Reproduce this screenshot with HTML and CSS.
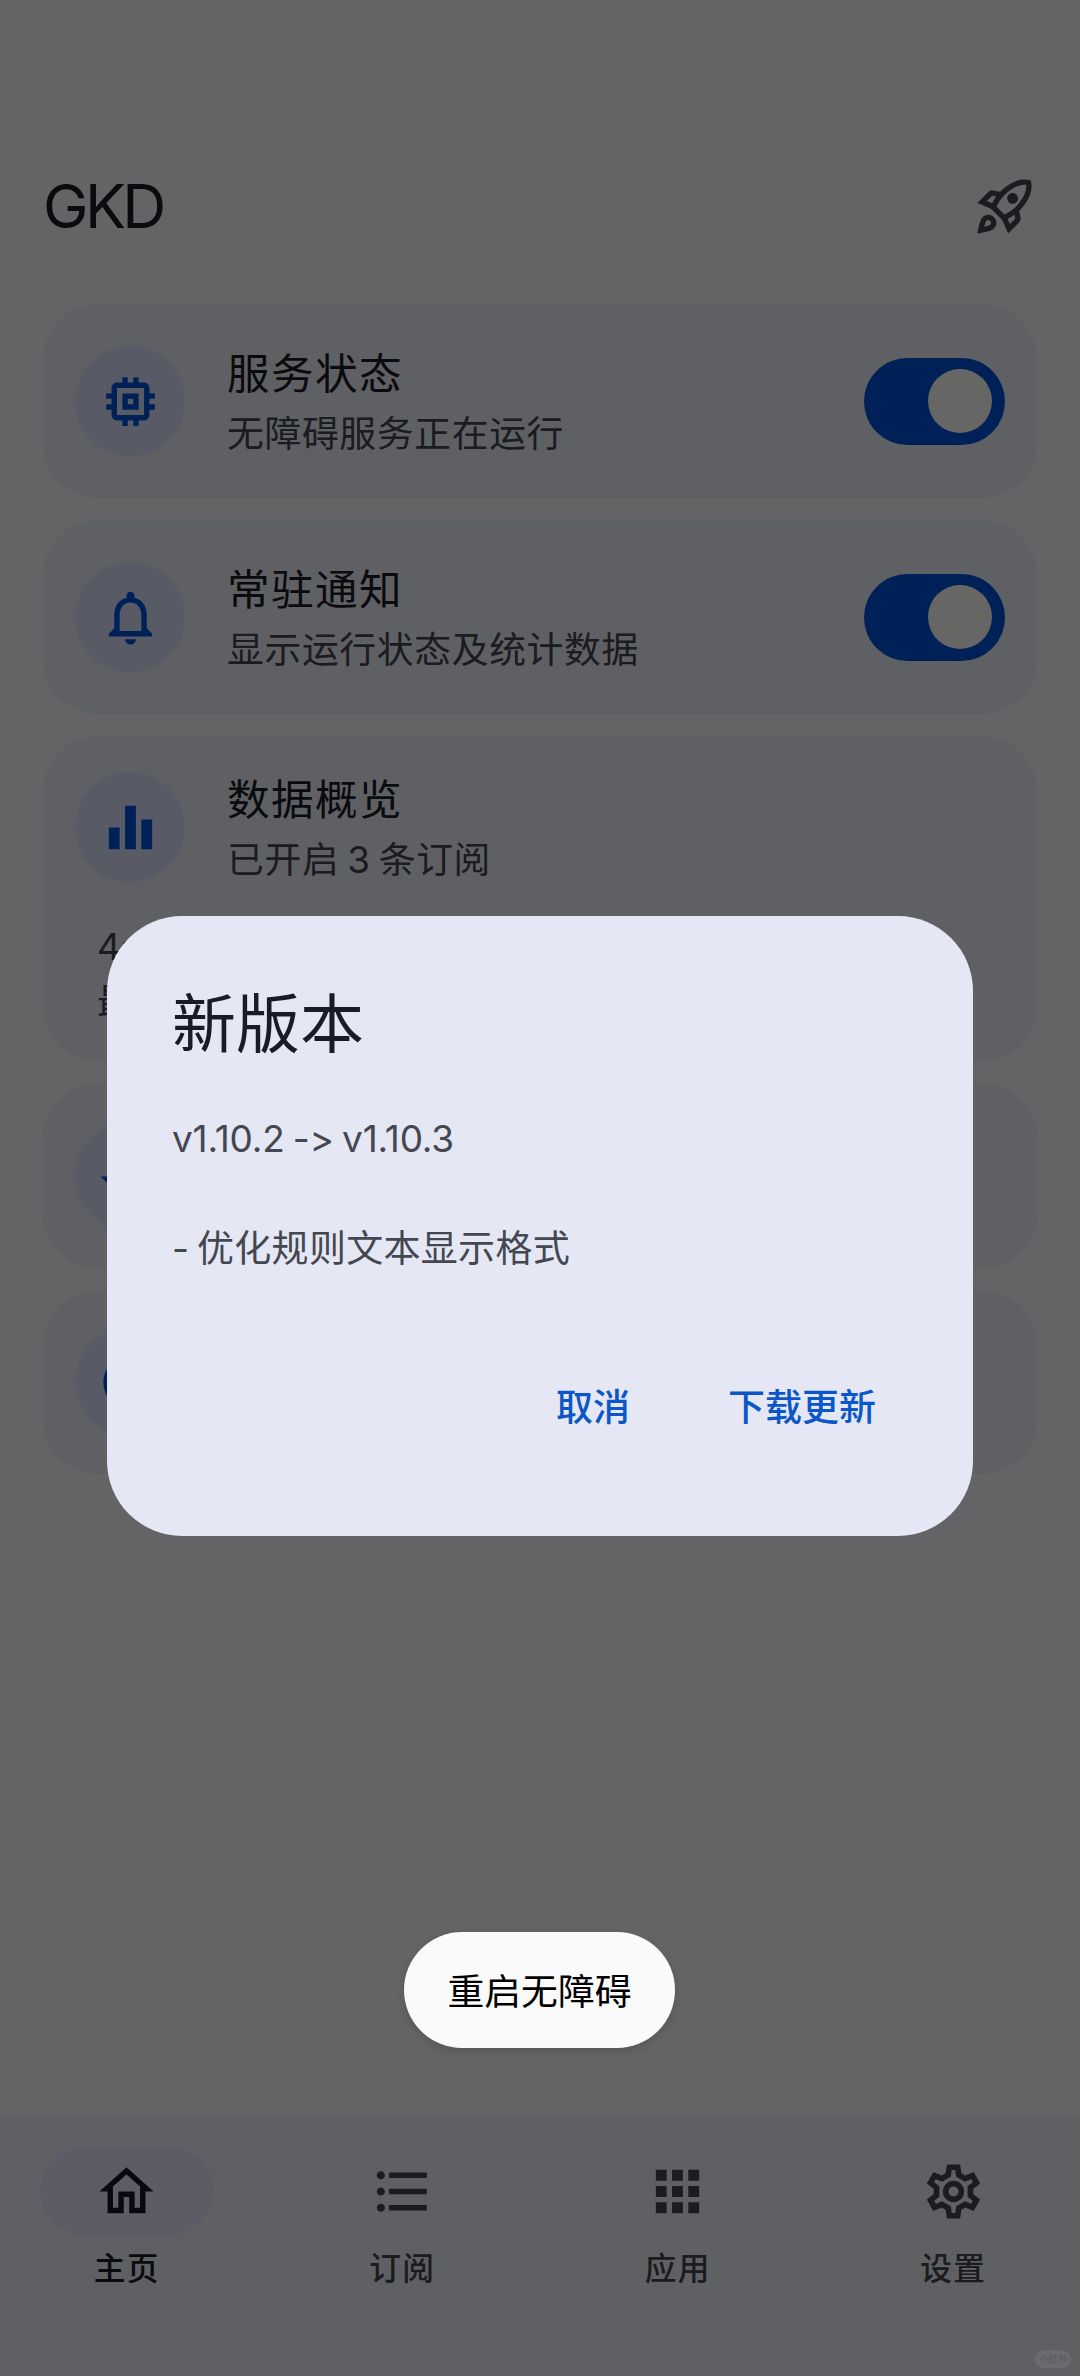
FILE: index.html
```html
<!DOCTYPE html>
<html lang="zh-CN">
<head>
<meta charset="utf-8">
<title>GKD</title>
<link rel="stylesheet" href="styles.css">
</head>
<body>
<div class="screen">
  <div class="app">
    <header class="topbar">
      <h1 class="brand">GKD</h1>
      <svg class="icon" viewBox="0 0 24 24"><path d="M6 15c-.83 0-1.58.34-2.12.88C2.7 17.06 2 22 2 22s4.94-.7 6.12-1.88C8.66 19.58 9 18.83 9 18c0-1.66-1.34-3-3-3zm.71 3.71c-.28.28-2.17.76-2.17.76s.47-1.88.76-2.17c.17-.19.42-.3.7-.3.55 0 1 .45 1 1 0 .28-.11.53-.29.71zM17.42 13.65c6.36-6.36 4.24-11.31 4.24-11.31s-4.95-2.12-11.31 4.24l-2.49-.5c-.65-.13-1.33.08-1.81.55L2 10.69l5 2.14L11.17 17l2.14 5 4.05-4.05c.47-.47.68-1.15.55-1.81l-.49-2.49zM7.41 10.83L5.5 10.01l1.97-1.97 1.44.29c-.57.83-1.08 1.7-1.5 2.5zM13.99 18.5l-.82-1.91c.8-.42 1.67-.93 2.49-1.5l.29 1.44-1.96 1.97zM16 12.24c-1.32 1.32-3.38 2.4-4.04 2.73l-2.93-2.93c.32-.65 1.4-2.71 2.73-4.04 4.68-4.68 8.23-3.99 8.23-3.99s.69 3.55-3.99 8.23zM15 11c1.1 0 2-.9 2-2s-.9-2-2-2-2 .9-2 2 .9 2 2 2z"/></svg>
    </header>

    <main class="cards">
      <section class="card card-switch">
        <span class="badge"><svg class="icon" viewBox="0 0 24 24"><path d="M15 9H9v6h6V9zm-2 4h-2v-2h2v2zm8-2V9h-2V7c0-1.1-.9-2-2-2h-2V3h-2v2h-2V3H9v2H7c-1.1 0-2 .9-2 2v2H3v2h2v2H3v2h2v2c0 1.1.9 2 2 2h2v2h2v-2h2v2h2v-2h2c1.1 0 2-.9 2-2v-2h2v-2h-2v-2h2zm-4 6H7V7h10v10z"/></svg></span>
        <div class="label"><h2>服务状态</h2><p>无障碍服务正在运行</p></div>
        <span class="switch"><span class="thumb"></span></span>
      </section>
      <section class="card card-switch">
        <span class="badge"><svg class="icon" viewBox="0 0 24 24"><path d="M12 22c1.1 0 2-.9 2-2h-4c0 1.1.9 2 2 2zm6-6v-5c0-3.07-1.63-5.64-4.5-6.32V4c0-.83-.67-1.5-1.5-1.5s-1.5.67-1.5 1.5v.68C7.64 5.36 6 7.92 6 11v5l-2 2v1h16v-1l-2-2zm-2 1H8v-6c0-2.48 1.51-4.5 4-4.5s4 2.02 4 4.5v6z"/></svg></span>
        <div class="label"><h2>常驻通知</h2><p>显示运行状态及统计数据</p></div>
        <span class="switch"><span class="thumb"></span></span>
      </section>
      <section class="card card-stats">
        <div class="row">
          <span class="badge"><svg class="icon" viewBox="0 0 24 24"><path d="M10 20h4V4h-4v16zm-6 0h4v-8H4v8zM16 9v11h4V9h-4z"/></svg></span>
          <div class="label"><h2>数据概览</h2><p>已开启 3 条订阅</p></div>
        </div>
        <p class="stats">4全<br>最</p>
      </section>
      <section class="card card-link">
        <span class="badge"><svg class="icon" viewBox="0 0 24 24"><path d="M13 3a9 9 0 0 0-9 9H1l3.89 3.89.07.14L9 12H6c0-3.87 3.13-7 7-7s7 3.13 7 7-3.13 7-7 7c-1.93 0-3.68-.79-4.94-2.06l-1.42 1.42A8.954 8.954 0 0 0 13 21a9 9 0 0 0 0-18zm-1 5v5l4.28 2.54.72-1.21-3.5-2.08V8H12z"/></svg></span>
      </section>
      <section class="card card-link">
        <span class="badge"><svg class="icon" viewBox="0 0 24 24"><path d="M11 18h2v-2h-2v2zm1-16C6.48 2 2 6.48 2 12s4.48 10 10 10 10-4.48 10-10S17.52 2 12 2zm0 18c-4.41 0-8-3.59-8-8s3.59-8 8-8 8 3.59 8 8-3.59 8-8 8zm0-14c-2.21 0-4 1.79-4 4h2c0-1.1.9-2 2-2s2 .9 2 2c0 2-3 1.75-3 5h2c0-2.25 3-2.5 3-5 0-2.21-1.79-4-4-4z"/></svg></span>
      </section>
    </main>

    <nav class="nav">
      <a class="tab active"><span class="pill"><svg class="icon" viewBox="0 0 24 24"><path d="M12 5.69l5 4.5V18h-2v-6H9v6H7v-7.81l5-4.5M12 3L2 12h3v8h6v-6h2v6h6v-8h3L12 3z"/></svg></span><span>主页</span></a>
      <a class="tab"><span class="pill"><svg class="icon" viewBox="0 0 24 24"><path d="M4 10.5c-.83 0-1.5.67-1.5 1.5s.67 1.5 1.5 1.5 1.5-.67 1.5-1.5-.67-1.5-1.5-1.5zm0-6c-.83 0-1.5.67-1.5 1.5S3.17 7.5 4 7.5 5.5 6.83 5.5 6 4.83 4.5 4 4.5zm0 12c-.83 0-1.5.68-1.5 1.5s.68 1.5 1.5 1.5 1.5-.68 1.5-1.5-.67-1.5-1.5-1.5zM7 19h14v-2H7v2zm0-6h14v-2H7v2zm0-8v2h14V5H7z"/></svg></span><span>订阅</span></a>
      <a class="tab"><span class="pill"><svg class="icon" viewBox="0 0 24 24"><path d="M4 8h4V4H4v4zm6 12h4v-4h-4v4zm-6 0h4v-4H4v4zm0-6h4v-4H4v4zm6 0h4v-4h-4v4zm6-10v4h4V4h-4zm-6 4h4V4h-4v4zm6 6h4v-4h-4v4zm0 6h4v-4h-4v4z"/></svg></span><span>应用</span></a>
      <a class="tab"><span class="pill"><svg class="icon" viewBox="0 0 24 24"><g fill="none" stroke="currentColor" stroke-width="2.1"><path d="M10.45 3.05h3.1l.4 2.85 2.35 1.35 2.7-1.1 1.5 2.65-2.25 1.75v2.9l2.25 1.75-1.5 2.65-2.7-1.1-2.35 1.35-.4 2.85h-3.1l-.4-2.85-2.35-1.35-2.7 1.1-1.5-2.65 2.25-1.75v-2.9L3.5 8.8 5 6.15l2.7 1.1 2.35-1.35z"/><circle cx="12" cy="12" r="2.9"/></g></svg></span><span>设置</span></a>
    </nav>
  </div>

  <div class="scrim"></div>
  <div class="dialog">
    <h2 class="dialog-title">新版本</h2>
    <div class="dialog-body"><p class="version">v1.10.2 -&gt; v1.10.3</p><p>- 优化规则文本显示格式</p></div>
    <div class="actions"><span>取消</span><span>下载更新</span></div>
  </div>
  <div class="toast">重启无障碍</div>
  <div class="watermark">小红书</div>
</div>
</body>
</html>
```
FILE: styles.css
```css
* { box-sizing: border-box; margin: 0; padding: 0; }

body {
  width: 1080px;
  height: 2376px;
  overflow: hidden;
  font-family: Inter, "Noto Sans CJK SC", sans-serif;
  font-weight: 400;
}

.screen { position: relative; width: 1080px; height: 2376px; }

.app {
  display: flex;
  flex-direction: column;
  height: 100%;
  background: #fafafe;
  color: #191c24;
}

.icon { display: block; width: 65px; height: 65px; fill: currentColor; }

.topbar {
  display: flex;
  align-items: center;
  justify-content: space-between;
  height: 304px;
  padding: 108px 43px 0;
  color: #44474f;
}
.brand {
  color: #191c24;
  font-size: 61px;
  font-weight: 400;
  line-height: 76px;
  letter-spacing: -3.6px;
}

.cards { flex: 1; display: flex; flex-direction: column; gap: 22px; padding: 0 43px; }
.card { border-radius: 55px; background: #eef0f8; padding: 0 32px; }
.card-switch { display: flex; align-items: center; height: 194px; }
.card-stats { height: 326px; padding-top: 31px; }
.card-link { display: flex; align-items: center; height: 184px; }
.row { display: flex; align-items: center; }

.badge {
  display: grid;
  place-items: center;
  flex: none;
  width: 110px;
  height: 110px;
  border-radius: 50%;
  background: #dce4ff;
  color: #0052dc;
}

.label { flex: 1; padding-left: 42px; }
.label h2 { font-size: 42.6px; font-weight: 400; line-height: 66px; letter-spacing: 1.4px; }
.label p { color: #44474f; font-size: 36.8px; line-height: 54px; letter-spacing: .65px; word-spacing: -3px; }
.stats { padding: 32px 0 0 22px; color: #44474f; font-size: 36.8px; line-height: 55px; letter-spacing: 1px; }

.switch {
  display: flex;
  align-items: center;
  justify-content: flex-end;
  width: 141px;
  height: 87px;
  padding-right: 13px;
  border-radius: 44px;
  background: #0052dc;
}
.thumb { width: 64px; height: 64px; border-radius: 50%; background: #fffffc; }

.nav { display: flex; gap: 22px; height: 260px; padding-top: 31px; background: #eef0f8; }
.tab {
  flex: 1;
  display: flex;
  flex-direction: column;
  align-items: center;
  color: #44474f;
  font-size: 31.7px;
  font-weight: 500;
  line-height: 44px;
  letter-spacing: 1.3px;
}
.pill {
  display: grid;
  place-items: center;
  width: 174px;
  height: 88px;
  margin-bottom: 12px;
  border-radius: 44px;
}
.active { color: #191c24; }
.active .pill { background: #e6e4ff; color: #16162e; }

.scrim { position: absolute; inset: 0; background: rgba(0, 0, 0, .6); }

.dialog {
  position: absolute;
  left: 107px;
  top: 916px;
  display: flex;
  flex-direction: column;
  width: 866px;
  height: 620px;
  padding: 65px;
  border-radius: 75px;
  background: #e5e7f4;
  color: #44474f;
}
.dialog-title { color: #191c28; font-size: 64px; font-weight: 400; line-height: 86px; }
.dialog-body { padding-top: 44px; font-size: 37px; line-height: 55px; letter-spacing: .3px; word-spacing: -3px; }
.version { margin-bottom: 55px; letter-spacing: -.2px; word-spacing: -2px; }
.actions {
  display: flex;
  justify-content: flex-end;
  gap: 98px;
  padding: 104px 32px 0 0;
  color: #0b57c9;
  font-size: 37px;
  font-weight: 500;
  line-height: 55px;
}

.toast {
  position: absolute;
  left: 404px;
  top: 1932px;
  width: 271px;
  height: 116px;
  border-radius: 58px;
  background: #fafafa;
  box-shadow: 0 3px 8px rgba(0, 0, 0, .14);
  color: #000;
  font-size: 36.8px;
  line-height: 120px;
  text-align: center;
}

.watermark {
  position: absolute;
  left: 1035px;
  top: 2350px;
  width: 36px;
  height: 18px;
  border-radius: 9px;
  background: #6a6b6e;
  color: #58595c;
  font-size: 9px;
  line-height: 18px;
  text-align: center;
}
```
